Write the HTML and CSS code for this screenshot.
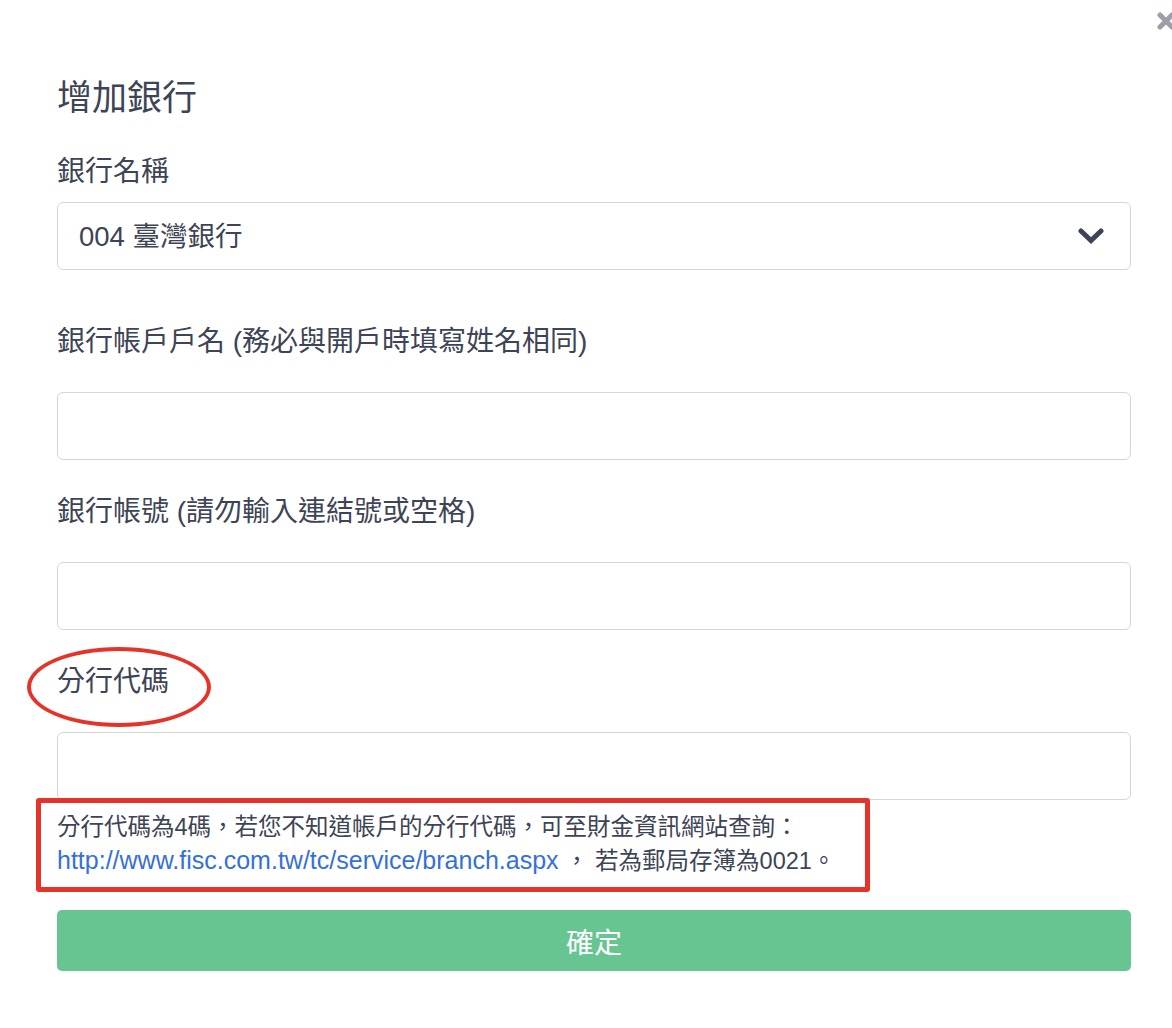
FILE: index.html
```html
<!DOCTYPE html>
<html lang="zh-Hant">
<head>
  <meta charset="UTF-8">
  <title>增加銀行</title>
  <link rel="stylesheet" href="styles.css">
</head>
<body>
  <div class="modal">
    <!-- 關閉 -->
    <svg class="close-btn" width="18" height="18" viewBox="0 0 18 18">
      <path d="M3 3 L15 15 M15 3 L3 15" stroke="#9c9fa8" stroke-width="5" stroke-linecap="round"/>
    </svg>

    <h2 class="modal-title">增加銀行</h2>

    <div class="form-group select-group">
      <label class="field-label select-label">銀行名稱</label>
      <div class="select-box">
        <select>
          <option>004 臺灣銀行</option>
        </select>
        <svg class="chevron" width="26" height="16" viewBox="0 0 26 16">
          <path d="M3 3 L13 12.5 L23 3" fill="none" stroke="#3d4456" stroke-width="5" stroke-linecap="round" stroke-linejoin="miter"/>
        </svg>
      </div>
    </div>

    <div class="form-group">
      <label class="field-label">銀行帳戶戶名 (務必與開戶時填寫姓名相同)</label>
      <input class="text-input" type="text">
    </div>

    <div class="form-group">
      <label class="field-label">銀行帳號 (請勿輸入連結號或空格)</label>
      <input class="text-input" type="text">
    </div>

    <div class="form-group">
      <label class="field-label">分行代碼</label>
      <input class="text-input" type="text">
      <p class="help-text">
        分行代碼為4碼，若您不知道帳戶的分行代碼，可至財金資訊網站查詢：<br>
        <a href="#">http://www.fisc.com.tw/tc/service/branch.aspx</a> ， 若為郵局存簿為0021。
      </p>
    </div>

    <button class="submit-btn">確定</button>

    <!-- 標註 -->
    <div class="mark-ellipse"></div>
    <div class="mark-box"></div>
  </div>
</body>
</html>
```

FILE: styles.css
```css
body {
  margin: 0;
  padding: 0;
  background: #fff;
  font-family: "Liberation Sans", "Noto Sans CJK TC", sans-serif;
  color: #3d4455;
  overflow: hidden;
}
.modal {
  position: relative;
  width: 1172px;
  height: 1028px;
  box-sizing: border-box;
  padding: 76px 41px 0 57px;
}
.close-btn {
  position: absolute;
  top: 12px;
  right: -3px;
}
.modal-title {
  font-size: 35px;
  font-weight: normal;
  line-height: 43px;
  margin: 0 0 33px;
}
.form-group {
  margin-bottom: 32px;
}
.select-group {
  margin-bottom: 52px;
}
.field-label {
  display: block;
  font-size: 28px;
  line-height: 40px;
  margin-bottom: 30px;
}
.field-label.select-label {
  margin-bottom: 10px;
}
.select-box {
  display: flex;
  align-items: center;
  height: 68px;
  box-sizing: border-box;
  border: 1px solid #d6d6d6;
  border-radius: 6px;
  padding-right: 26px;
}
.select-box select {
  flex: 1;
  -webkit-appearance: none;
  appearance: none;
  border: none;
  outline: none;
  background: transparent;
  font-family: inherit;
  font-size: 27.5px;
  color: #3d4455;
  padding: 0 0 0 21px;
  height: 100%;
}
.chevron {
  flex: none;
}
.text-input {
  display: block;
  width: 100%;
  height: 68px;
  box-sizing: border-box;
  border: 1px solid #d6d6d6;
  border-radius: 6px;
  padding: 0 21px;
  font-family: inherit;
  font-size: 27px;
  outline: none;
}
.help-text {
  font-size: 23.5px;
  line-height: 33px;
  margin: 11px 0 0;
}
.help-text a {
  color: #3470d9;
  font-size: 25px;
  text-decoration: none;
}
.submit-btn {
  display: block;
  width: 100%;
  height: 61px;
  margin-top: 1px;
  border: none;
  border-radius: 5px;
  background: #67c592;
  color: #fff;
  font-family: inherit;
  font-size: 28px;
  cursor: pointer;
}
.mark-ellipse {
  position: absolute;
  left: 27px;
  top: 647px;
  width: 184px;
  height: 80px;
  box-sizing: border-box;
  border: 4px solid #e6332a;
  border-radius: 50%;
}
.mark-box {
  position: absolute;
  left: 36px;
  top: 798px;
  width: 834px;
  height: 94px;
  box-sizing: border-box;
  border: 5px solid #e6332a;
  border-radius: 3px;
}
```
